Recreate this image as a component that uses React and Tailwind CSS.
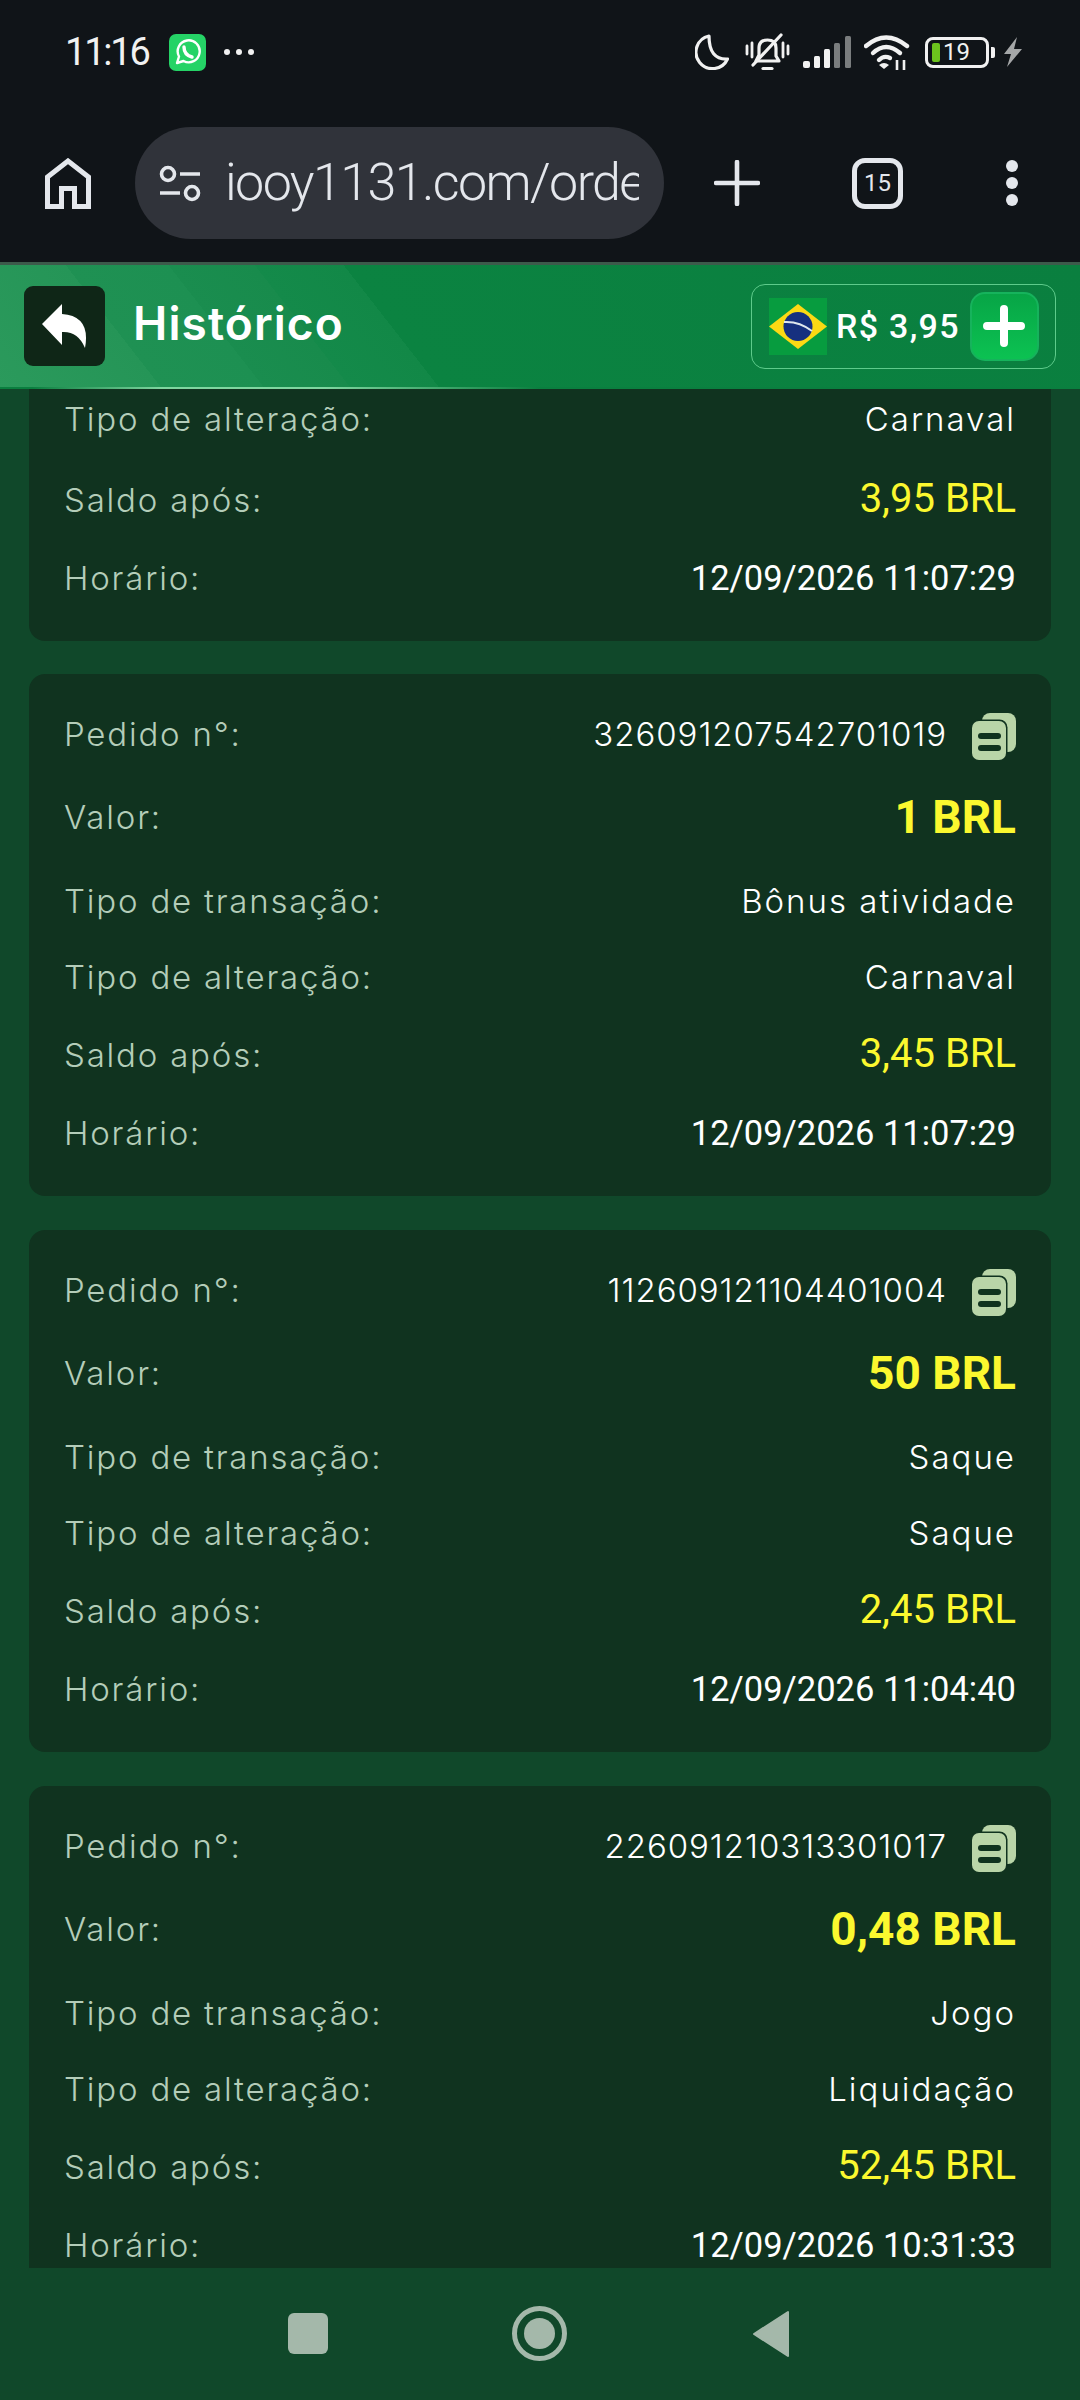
import React from 'react';

const cards = [
  { id: '326091207542701019', amount: '1 BRL', tx: 'Bônus atividade', change: 'Carnaval', balance: '3,45 BRL', time: '12/09/2026 11:07:29' },
  { id: '112609121104401004', amount: '50 BRL', tx: 'Saque', change: 'Saque', balance: '2,45 BRL', time: '12/09/2026 11:04:40' },
  { id: '226091210313301017', amount: '0,48 BRL', tx: 'Jogo', change: 'Liquidação', balance: '52,45 BRL', time: '12/09/2026 10:31:33' },
];

function Label({ children }) {
  return <span className="font-['Inter',sans-serif] text-[33px] font-light tracking-[1.8px] text-[#b4cdb9]">{children}</span>;
}

function Text({ children }) {
  return <span className="font-['Inter',sans-serif] text-[33px] font-light tracking-[2px] text-white">{children}</span>;
}

function Balance({ children }) {
  return <span className="mb-[3px] font-['Roboto',sans-serif] text-[40px] text-[#fbf82f]">{children}</span>;
}

function Time({ children }) {
  return <span className="font-['Roboto',sans-serif] text-[34.5px] text-white">{children}</span>;
}

function Row({ label, h, children }) {
  return (
    <div className={`flex items-center justify-between ${h}`}>
      <Label>{label}</Label>
      {children}
    </div>
  );
}

function CopyIcon() {
  return (
    <svg width="44" height="47" viewBox="0 0 44 47" className="mt-[3px] ml-[25px] shrink-0">
      <rect x="10" y="0" width="34" height="39" rx="8" fill="#b9d5a8" />
      <rect x="-1.5" y="6.5" width="37" height="41" rx="8" fill="#10331f" />
      <rect x="0" y="8" width="34" height="39" rx="7" fill="#b9d5a8" />
      <rect x="6" y="20" width="23" height="6" rx="3" fill="#10331f" />
      <rect x="6" y="32" width="23" height="6" rx="3" fill="#10331f" />
    </svg>
  );
}

function Card({ id, amount, tx, change, balance, time }) {
  return (
    <div className="rounded-[16px] bg-[#10331f] px-[35px] pt-[20px] pb-[23px]">
      <Row label="Pedido n°:" h="h-[82px]">
        <div className="flex items-center">
          <span className="font-['Inter',sans-serif] text-[33px] font-light tracking-[0.95px] text-white">{id}</span>
          <CopyIcon />
        </div>
      </Row>
      <Row label="Valor:" h="h-[83px]">
        <span className="font-['Roboto',sans-serif] text-[46px] font-bold text-[#fbf82f]">{amount}</span>
      </Row>
      <Row label="Tipo de transação:" h="h-[80px] pt-[5px]"><Text>{tx}</Text></Row>
      <Row label="Tipo de alteração:" h="h-[77px]"><Text>{change}</Text></Row>
      <Row label="Saldo após:" h="h-[79px]"><Balance>{balance}</Balance></Row>
      <Row label="Horário:" h="h-[78px]"><Time>{time}</Time></Row>
    </div>
  );
}

function StatusIcons() {
  return (
    <div className="flex items-center">
      {/* moon */}
      <svg width="34" height="36" viewBox="0 0 34 36" fill="none" stroke="#f1f1f1" strokeWidth="3.2">
        <path d="M14 2 A16.5 16.5 0 1 0 32.5 25 Q14 26 14 2 Z" strokeLinejoin="round" />
      </svg>
      {/* muted vibrate bell */}
      <svg width="45" height="38" viewBox="0 0 45 38" className="ml-[16px]" fill="none" stroke="#f1f1f1" strokeWidth="3.2" strokeLinecap="round">
        <path d="M11 28 H34 L31 23 V15 Q31 7 22.5 7 Q14 7 14 15 V22 Z" strokeLinejoin="round" />
        <path d="M8 32 L36 2" />
        <path d="M18 35.5 H27" />
        <path d="M2 13 V21 M7 10 V24 M38 10 V24 M43 13 V21" strokeWidth="2.8" />
      </svg>
      {/* signal */}
      <svg width="48" height="32" viewBox="0 0 48 32" className="ml-[13px]">
        <rect x="0" y="25" width="7" height="7" rx="2" fill="#f1f1f1" />
        <rect x="11" y="20" width="6" height="12" rx="1.5" fill="#f1f1f1" />
        <rect x="21" y="13" width="6" height="19" rx="1.5" fill="#f1f1f1" />
        <rect x="31" y="7" width="6" height="25" rx="1.5" fill="#7a7d7e" />
        <rect x="42" y="0" width="6" height="32" rx="1.5" fill="#7a7d7e" />
      </svg>
      {/* wifi */}
      <svg width="46" height="36" viewBox="0 0 46 36" className="ml-[13px]" fill="none" stroke="#f1f1f1" strokeWidth="4.4" strokeLinecap="round">
        <path d="M2 12 Q22 -5 43 12" />
        <path d="M9 19 Q22 7 36 19" />
        <path d="M15 26 Q20 21 26 24" />
        <path d="M20 35 L15 31 Q20 27 25 31 Z" fill="#f1f1f1" stroke="none" />
        <path d="M33 26 V36 M40 26 V36" strokeWidth="2.6" strokeLinecap="butt" />
      </svg>
      {/* battery */}
      <div className="ml-[15px] flex items-center">
        <div className="flex h-[31px] w-[64px] items-center rounded-[8px] border-[3px] border-[#f1f1f1] pl-[4px]">
          <div className="h-[19px] w-[8px] rounded-[2px] bg-[#6cc21d]" />
          <span className="ml-[3px] font-['Roboto',sans-serif] text-[24px] leading-none text-[#f1f1f1]">19</span>
        </div>
        <div className="ml-[2px] h-[11px] w-[4px] rounded-r-[2px] bg-[#f1f1f1]" />
      </div>
      {/* bolt */}
      <svg width="19" height="30" viewBox="0 0 19 30" className="ml-[8px]">
        <path d="M14 0 L1 17 H8 L4 30 L19 12 H11 Z" fill="#a5a7a8" />
      </svg>
    </div>
  );
}

function Flag() {
  return (
    <svg width="58" height="57" viewBox="0 0 58 57" className="shrink-0">
      <rect width="58" height="57" fill="#079c3f" />
      <path d="M29 6 L58 28.5 L29 51 L0 28.5 Z" fill="#fbd914" />
      <circle cx="29" cy="28.5" r="14.5" fill="#16307f" />
      <path d="M15 24 Q30 23 43 33" fill="none" stroke="#dfe7ee" strokeWidth="2" />
    </svg>
  );
}

export default function App() {
  return (
    <div className="flex h-[2400px] w-[1080px] flex-col overflow-hidden bg-[#10482a]">
      {/* status bar + browser bar */}
      <div className="h-[262px] shrink-0 bg-[#101418]">
        <div className="flex h-[104px] items-center justify-between pr-[58px] pl-[65px]">
          <div className="flex items-center">
            <span className="w-[85px] font-['Roboto',sans-serif] text-[38px] leading-none tracking-[-2.2px] text-[#f1f1f1]">11:16</span>
            <div className="ml-[19px] flex h-[37px] w-[37px] items-center justify-center rounded-[7px] bg-[#25d366]">
              <svg width="26" height="26" viewBox="0 0 26 26" fill="none" stroke="white" strokeWidth="2.4">
                <path d="M2 24 L4 17.5 A11 11 0 1 1 8.5 22 Z" strokeLinejoin="round" />
                <path d="M9 8 Q9 16 17 18" strokeWidth="3.4" strokeLinecap="round" />
              </svg>
            </div>
            <div className="ml-[18px] flex items-center gap-[6px]">
              <div className="size-[6px] rounded-full bg-[#f1f1f1]" />
              <div className="size-[6px] rounded-full bg-[#f1f1f1]" />
              <div className="size-[6px] rounded-full bg-[#f1f1f1]" />
            </div>
          </div>
          <StatusIcons />
        </div>
        <div className="mt-[23px] flex h-[112px] items-center">
          <div className="w-[135px] shrink-0 pl-[45px]">
            <svg width="46" height="51" viewBox="0 0 46 51" fill="none" stroke="#e4e7ec" strokeWidth="5">
              <path d="M2.5 48.5 V19 L23 3 L43.5 19 V48.5 H29.5 V30.5 H16.5 V48.5 Z" />
            </svg>
          </div>
          <div className="flex h-[112px] w-[529px] shrink-0 items-center overflow-hidden rounded-full bg-[#30333a] pl-[24px]">
            <svg width="42" height="37" viewBox="0 0 42 37" fill="none" stroke="#e4e7ec" strokeWidth="3.6" className="shrink-0">
              <circle cx="9" cy="9" r="6.5" />
              <path d="M21 9 H41 M1 28 H21" />
              <circle cx="33" cy="28" r="6.5" />
            </svg>
            <span className="ml-[24px] w-[414px] overflow-hidden font-['Roboto',sans-serif] text-[52px] font-light tracking-[-1.6px] whitespace-nowrap text-[#e4e7ec]">iooy1131.com/orde</span>
          </div>
          <svg width="46" height="46" viewBox="0 0 46 46" stroke="#e4e7ec" strokeWidth="4.6" strokeLinecap="round" className="ml-[50px] shrink-0">
            <path d="M23 2 V44 M2 23 H44" />
          </svg>
          <div className="ml-[92px] flex size-[51px] shrink-0 items-center justify-center rounded-[13px] border-[5px] border-[#e4e7ec]">
            <span className="font-['Roboto',sans-serif] text-[24px] leading-none text-[#e4e7ec]">15</span>
          </div>
          <div className="ml-[103px] flex flex-col gap-[5px]">
            <div className="size-[12px] rounded-full bg-[#e4e7ec]" />
            <div className="size-[12px] rounded-full bg-[#e4e7ec]" />
            <div className="size-[12px] rounded-full bg-[#e4e7ec]" />
          </div>
        </div>
      </div>

      {/* page header */}
      <div className="flex h-[127px] shrink-0 flex-col border-t-[3px] border-t-[#3d5a4b] bg-[linear-gradient(52deg,#2b9a5c_0px,#259557_128px,#1f9153_128px,#1d9052_209px,#1a8d4f_209px,#188b4c_277px,#148a4a_277px,#128847_347px,#0b8341_347px,#0a7f3f_100%)]">
        <div className="flex flex-1 items-center justify-between px-[24px]">
          <div className="flex items-center">
            <div className="flex h-[80px] w-[81px] items-center justify-center rounded-[9px] bg-[#0f2617]">
              <svg width="46" height="45" viewBox="0 0 46 45">
                <path d="M20 0 L0 20 L20 41 V28 Q36 27 43 44 Q49 12 20 10 Z" fill="white" />
              </svg>
            </div>
            <span className="mb-[5px] ml-[28px] font-['Inter',sans-serif] text-[46px] font-semibold tracking-[1.1px] text-white">Histórico</span>
          </div>
          <div className="flex h-[85px] w-[305px] items-center rounded-[14px] border-[1.5px] border-[#5ecb8b] pl-[17px]">
            <Flag />
            <span className="ml-[9px] font-['Roboto',sans-serif] text-[34px] font-medium tracking-[1.3px] whitespace-nowrap text-white">R$ 3,95</span>
            <div className="ml-[10px] flex size-[69px] shrink-0 items-center justify-center rounded-[15px] border-[2px] border-[#16b35c] bg-[linear-gradient(180deg,#07a546,#0cc252)]">
              <svg width="42" height="42" viewBox="0 0 42 42" stroke="white" strokeWidth="8" strokeLinecap="round">
                <path d="M21 4 V38 M4 21 H38" />
              </svg>
            </div>
          </div>
        </div>
        <div className="h-[2px] bg-[linear-gradient(90deg,#0a7f3f_3%,#7fd6a0_15%,#7fd6a0_30%,#0a7f3f_50%)]" />
      </div>

      {/* scrolled list */}
      <div className="h-[1879px] shrink-0 overflow-hidden px-[29px]">
        <div className="rounded-b-[16px] bg-[#10331f] px-[35px] pb-[23px]">
          <Row label="Tipo de alteração:" h="h-[61px]"><Text>Carnaval</Text></Row>
          <div className="h-[11px]" />
          <Row label="Saldo após:" h="h-[79px]"><Balance>3,95 BRL</Balance></Row>
          <Row label="Horário:" h="h-[78px]"><Time>12/09/2026 11:07:29</Time></Row>
        </div>
        <div className="mt-[33px] flex flex-col gap-[34px]">
          {cards.map(c => <Card key={c.id} {...c} />)}
        </div>
      </div>

      {/* android nav bar */}
      <div className="flex flex-1 items-center bg-[#10482a] pb-[1px]">
        <div className="ml-[288px] h-[41px] w-[40px] rounded-[6px] bg-[#a4b8aa]" />
        <div className="ml-[184px] flex size-[55px] items-center justify-center rounded-full border-[5px] border-[#a4b8aa]">
          <div className="size-[31px] rounded-full bg-[#a4b8aa]" />
        </div>
        <svg width="38" height="48" viewBox="0 0 38 48" className="ml-[185px]">
          <path d="M36 2 V46 L2 24 Z" fill="#a4b8aa" stroke="#a4b8aa" strokeWidth="2" strokeLinejoin="round" />
        </svg>
      </div>
    </div>
  );
}
